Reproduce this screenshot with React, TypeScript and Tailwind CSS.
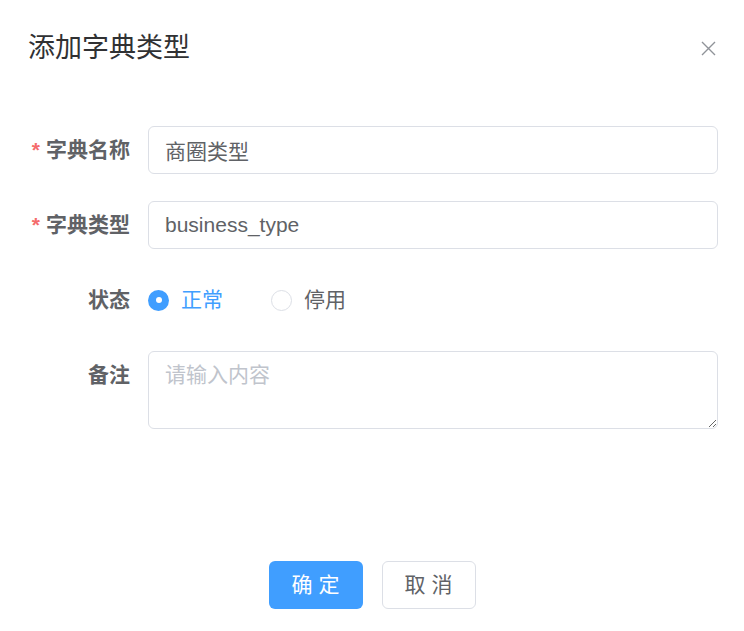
import React, { useState } from 'react';

const FONT = '"Liberation Sans", "Noto Sans CJK SC", "Noto Sans", sans-serif';

const Label: React.FC<{ text: string; required?: boolean }> = ({ text, required }) => (
  <div className="w-[120px] shrink-0 pr-[18px] text-right text-[21px] leading-[48px] font-bold text-[#606266]">
    {required && <span className="mr-[6px] text-[#f56c6c]">*</span>}
    {text}
  </div>
);

export default function App() {
  const [status, setStatus] = useState<'0' | '1'>('0');
  const [name, setName] = useState('商圈类型');
  const [type, setType] = useState('business_type');

  return (
    <div className="w-[744px] h-[631px] bg-white flex flex-col overflow-hidden" style={{ fontFamily: FONT }}>
      <div className="flex items-center justify-between pt-[30px] pl-[28px] pr-[28px]">
        <span className="text-[27px] leading-[36px] text-[#303133]">添加字典类型</span>
        <button className="w-[16px] h-[16px] flex items-center justify-center text-[#909399]">
          <svg width="15" height="15" viewBox="0 0 15 15" fill="none" stroke="currentColor" strokeWidth="1.4">
            <path d="M1 1 L14 14 M14 1 L1 14" />
          </svg>
        </button>
      </div>

      <div className="pt-[60px] pl-[28px] pr-[26px] flex flex-col gap-[27px]">
        <div className="flex">
          <Label text="字典名称" required />
          <input
            value={name}
            onChange={e => setName(e.target.value)}
            className="flex-1 h-[48px] px-[16px] rounded-[6px] border border-[#dcdfe6] text-[21px] text-[#606266] outline-none"
          />
        </div>
        <div className="flex">
          <Label text="字典类型" required />
          <input
            value={type}
            onChange={e => setType(e.target.value)}
            className="flex-1 h-[48px] px-[16px] rounded-[6px] border border-[#dcdfe6] text-[21px] text-[#606266] outline-none"
          />
        </div>
        <div className="flex">
          <Label text="状态" />
          <div className="flex items-center h-[48px] gap-[48px]">
            {[
              { v: '0' as const, t: '正常' },
              { v: '1' as const, t: '停用' },
            ].map(o => (
              <label key={o.v} className="flex items-center gap-[12px] cursor-pointer" onClick={() => setStatus(o.v)}>
                {status === o.v ? (
                  <span className="w-[21px] h-[21px] rounded-full bg-[#409eff] flex items-center justify-center">
                    <span className="w-[6px] h-[6px] rounded-full bg-white" />
                  </span>
                ) : (
                  <span className="w-[21px] h-[21px] rounded-full border border-[#dcdfe6] bg-white" />
                )}
                <span className={`text-[21px] ${status === o.v ? 'text-[#409eff]' : 'text-[#606266]'}`}>{o.t}</span>
              </label>
            ))}
          </div>
        </div>
        <div className="flex">
          <Label text="备注" />
          <textarea
            placeholder="请输入内容"
            className="flex-1 h-[78px] px-[16px] py-[7px] rounded-[6px] border border-[#dcdfe6] text-[21px] leading-[31px] text-[#606266] placeholder-[#c0c4cc] outline-none"
          />
        </div>
      </div>

      <div className="mt-[132px] flex justify-center gap-[19px]">
        <button className="w-[94px] h-[48px] rounded-[6px] bg-[#409eff] text-white text-[21px]">确 定</button>
        <button className="w-[94px] h-[48px] rounded-[6px] border border-[#dcdfe6] bg-white text-[#606266] text-[21px]">取 消</button>
      </div>
    </div>
  );
}
